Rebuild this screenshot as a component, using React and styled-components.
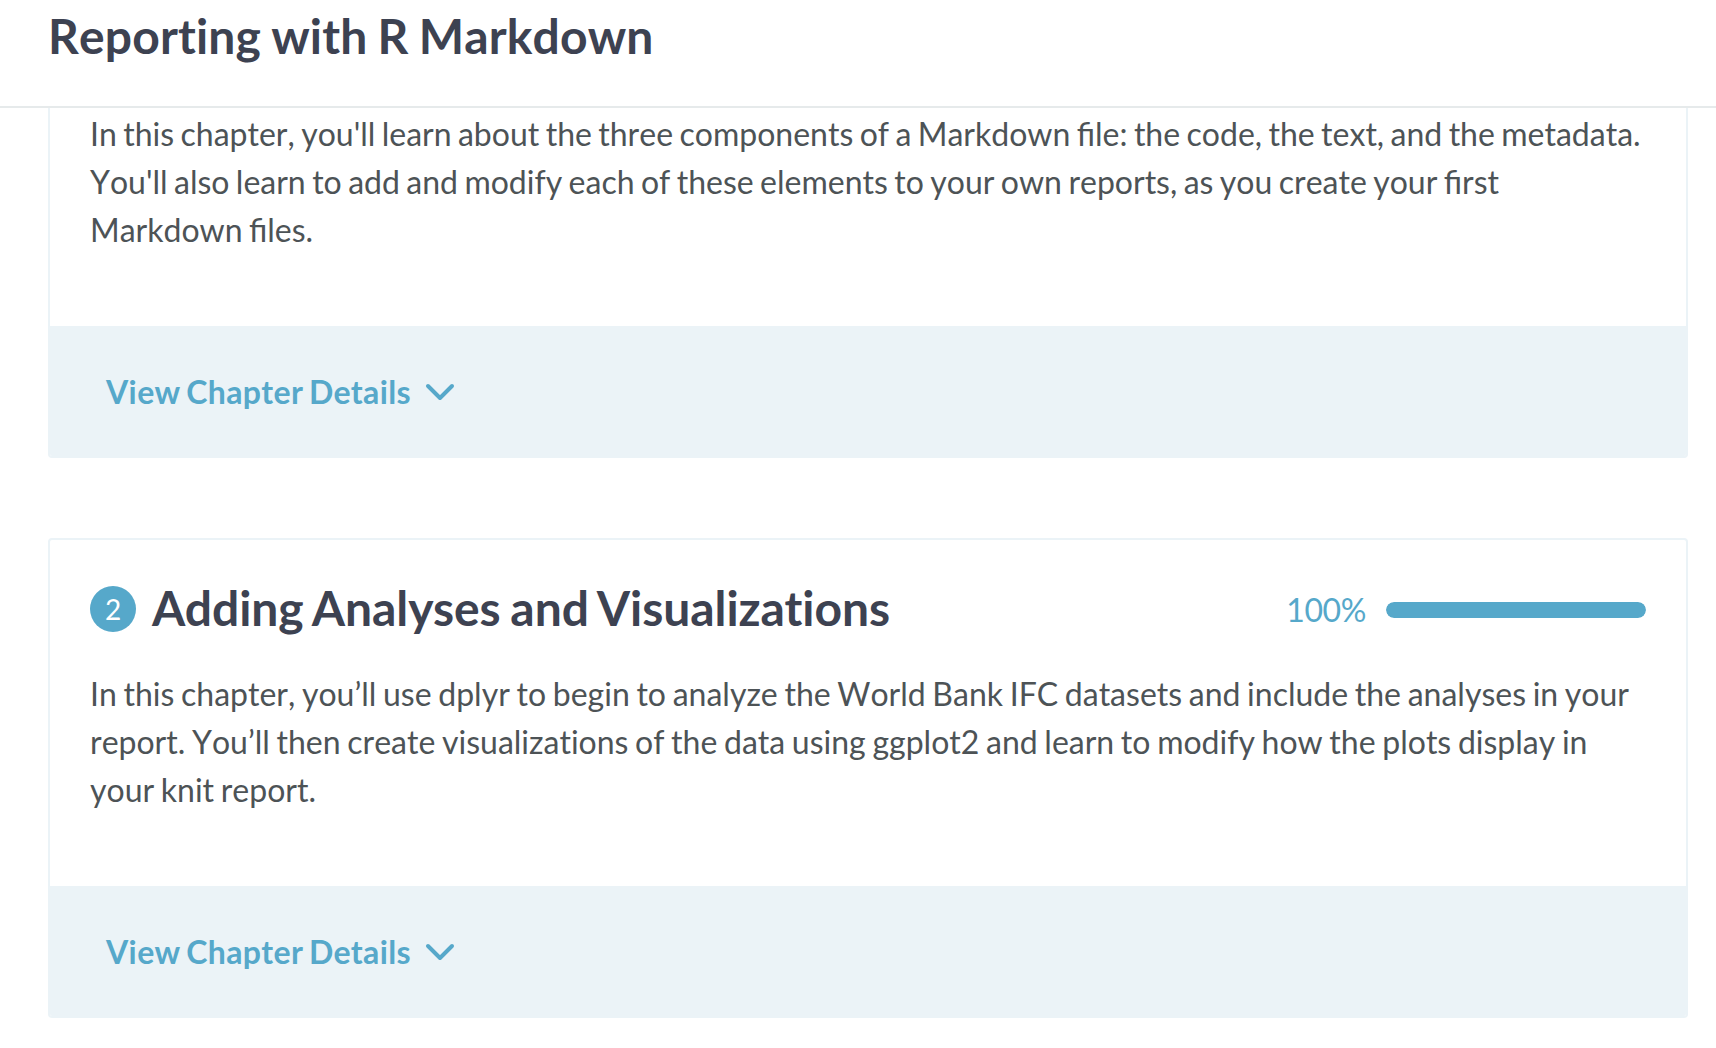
import React from 'react';
import styled, { createGlobalStyle } from 'styled-components';

const Global = createGlobalStyle`
  *, *::before, *::after { box-sizing: border-box; }
  body { margin: 0; background: #fff; font-family: Lato, sans-serif; color: #4d5356; }
  h1, h2, p { margin: 0; }
`;
const Page = styled.div`
  width: 100%;
  height: 1048px;
  overflow: hidden;
  display: flex;
  flex-direction: column;
`;
const Header = styled.header`
  flex: none;
  height: 108px;
  padding: 6px 48px 0;
  border-bottom: 2px solid #e6eaeb;
`;
const Title = styled.h1`
  font-size: 48px;
  line-height: 59px;
  font-weight: 700;
  font-kerning: none;
  letter-spacing: 0.14px;
  word-spacing: -1.6px;
  color: #3d4251;
  white-space: nowrap;
`;
const List = styled.main`
  display: flex;
  flex-direction: column;
  gap: 80px;
  padding: 0 28px 0 48px;
`;
const Card = styled.section`
  border: 2px solid #ebf3f7;
  border-top-width: ${p => (p.$cut ? 0 : 2)}px;
  border-radius: ${p => (p.$cut ? '0 0 4px 4px' : '4px')};
  overflow: hidden;
`;
const Body = styled.div`
  height: ${p => p.$height}px;
  padding: ${p => p.$top}px 40px 0;
`;
const Heading = styled.div`
  display: flex;
  align-items: center;
  height: 60px;
  margin-bottom: 31px;
`;
const Badge = styled.span`
  width: 46px;
  height: 46px;
  margin-right: 16px;
  border-radius: 50%;
  background: #56a8ca;
  color: #fff;
  font-size: 28px;
  line-height: 46px;
  text-align: center;
`;
const ChapterTitle = styled.h2`
  flex: 1;
  padding-bottom: 2px;
  font-size: 48px;
  line-height: 60px;
  font-weight: 700;
  letter-spacing: -0.05px;
  word-spacing: -1.9px;
  color: #3d4251;
`;
const Percent = styled.span`
  margin-right: 20px;
  padding-top: 2px;
  font-size: 32px;
  line-height: 48px;
  letter-spacing: -0.4px;
  color: #56a8ca;
`;
const Track = styled.div`
  width: 260px;
  height: 16px;
  margin-top: 2px;
  border-radius: 8px;
  background: #ebf3f7;
  overflow: hidden;
`;
const Fill = styled.div`
  height: 100%;
  border-radius: 8px;
  background: #56a8ca;
`;
const Text = styled.p`
  font-size: 32px;
  line-height: 48px;
  font-kerning: none;
  word-spacing: ${p => p.$spacing}px;
  white-space: nowrap;
`;
const Plain = styled.span`
  font-variant-ligatures: none;
`;
const Footer = styled.div`
  height: 130px;
  padding: 2px 0 0 56px;
  background: #ebf3f7;
  display: flex;
  align-items: center;
`;
const Toggle = styled.button`
  display: flex;
  align-items: center;
  gap: 14px;
  padding: 0;
  border: 0;
  background: none;
  color: #56a8ca;
  font: 700 32px/48px Lato, sans-serif;
  letter-spacing: 0.4px;
  word-spacing: -1.8px;
`;

const Details = () => (
  <Footer>
    <Toggle>
      View Chapter Details
      <svg width="30" height="18" viewBox="0 0 30 18" fill="none">
        <path d="M3 3l12 12L27 3" stroke="currentColor" strokeWidth="4" strokeLinecap="round" strokeLinejoin="round" />
      </svg>
    </Toggle>
  </Footer>
);

export default function App() {
  const progress = 100;
  return (
    <Page>
      <Global />
      <Header><Title>Reporting with R Markdown</Title></Header>
      <List>
        <Card $cut>
          <Body $height={218} $top={2}>
            <Text $spacing={-1.78}>
              In this chapter, you'll learn about the three components of a Markdown file: the code, the text, and the metadata.<br />
              You'll also learn to add and modify each of these elements to your own reports, as you create your first<br />
              Markdown files.
            </Text>
          </Body>
          <Details />
        </Card>
        <Card>
          <Body $height={346} $top={39}>
            <Heading>
              <Badge>2</Badge>
              <ChapterTitle>Adding Analyses and Visualizations</ChapterTitle>
              <Percent>{progress}%</Percent>
              <Track><Fill style={{ width: `${progress}%` }} /></Track>
            </Heading>
            <Text $spacing={-1.53}>
              In this chapter, you’ll use dplyr to begin to analyze the World Bank IFC datasets and include the analyses in your<br />
              report. You’ll then create <Plain>visualizations</Plain> of the data using ggplot2 and learn to modify how the plots display in<br />
              your knit report.
            </Text>
          </Body>
          <Details />
        </Card>
      </List>
    </Page>
  );
}
